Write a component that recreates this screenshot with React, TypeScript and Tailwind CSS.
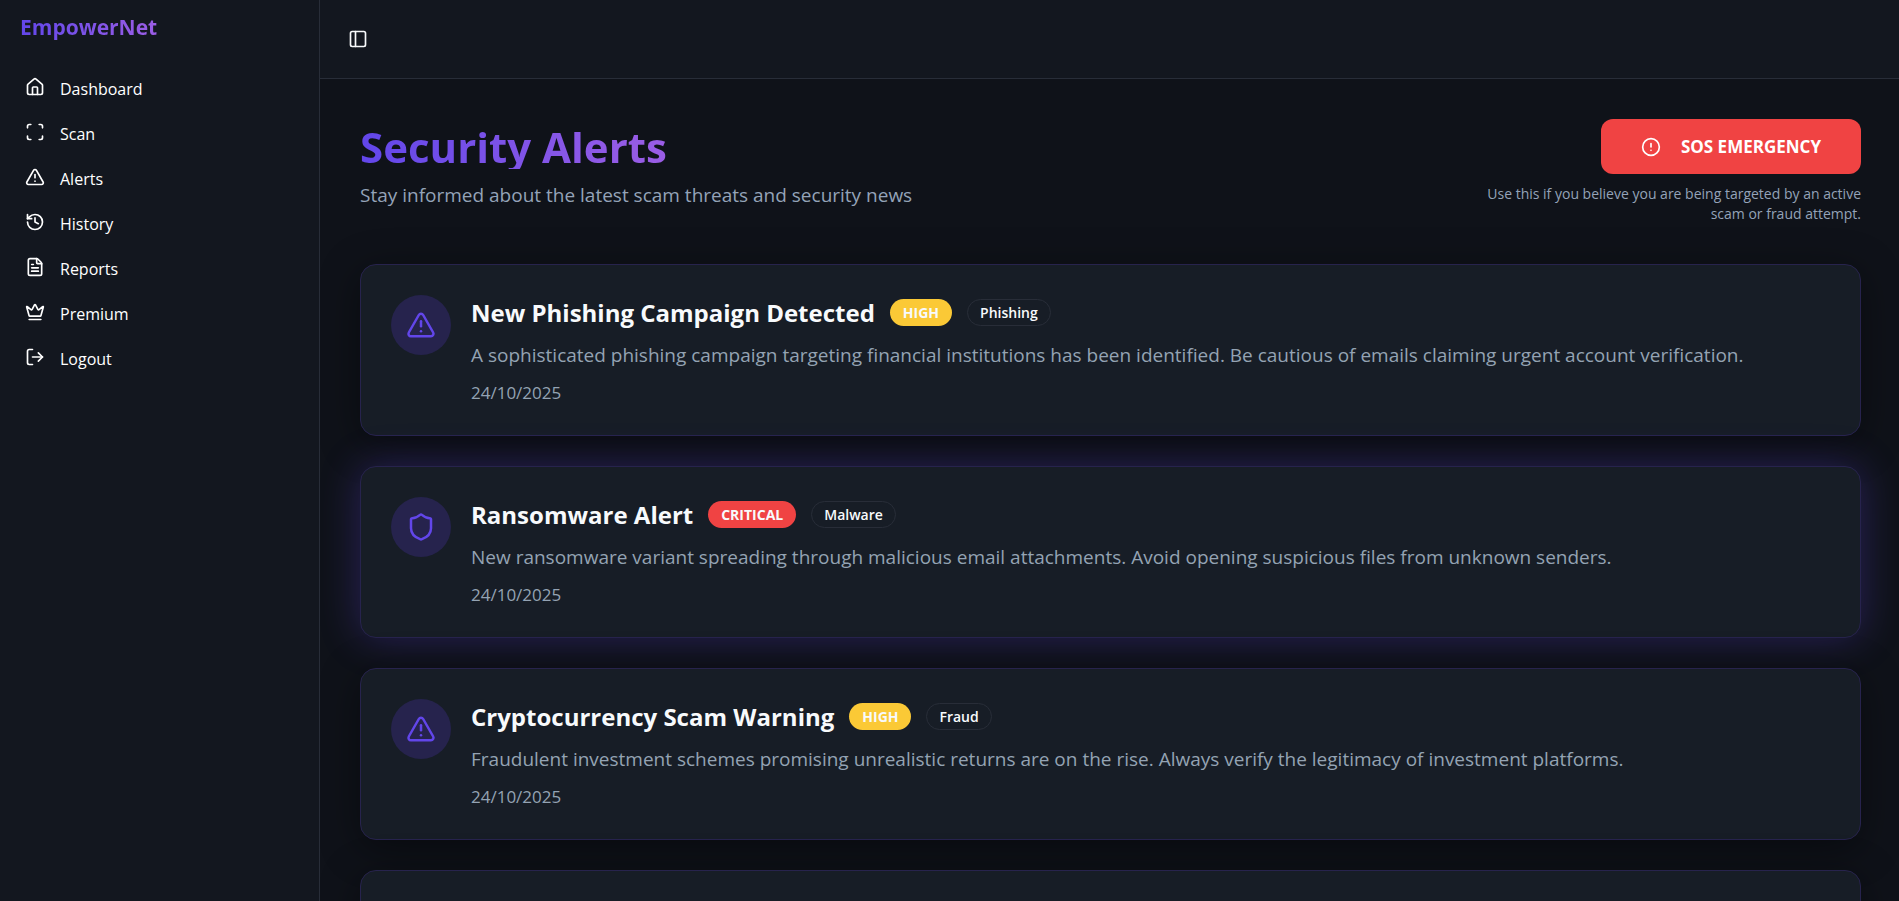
import type { LucideIcon } from 'lucide-react'
import {
  CircleAlert,
  Crown,
  FileText,
  History,
  House,
  LogOut,
  PanelLeft,
  Scan,
  Shield,
  TriangleAlert,
} from 'lucide-react'
import clsx from 'clsx'

interface Alert {
  id: number
  title: string
  description: string
  severity: 'high' | 'critical'
  category: string
  date: string
  icon: LucideIcon
  highlighted?: boolean
}

const navItems: { label: string; icon: LucideIcon }[] = [
  { label: 'Dashboard', icon: House },
  { label: 'Scan', icon: Scan },
  { label: 'Alerts', icon: TriangleAlert },
  { label: 'History', icon: History },
  { label: 'Reports', icon: FileText },
  { label: 'Premium', icon: Crown },
  { label: 'Logout', icon: LogOut },
]

const alerts: Alert[] = [
  {
    id: 1,
    title: 'New Phishing Campaign Detected',
    description:
      'A sophisticated phishing campaign targeting financial institutions has been identified. Be cautious of emails claiming urgent account verification.',
    severity: 'high',
    category: 'Phishing',
    date: '24/10/2025',
    icon: TriangleAlert,
  },
  {
    id: 2,
    title: 'Ransomware Alert',
    description:
      'New ransomware variant spreading through malicious email attachments. Avoid opening suspicious files from unknown senders.',
    severity: 'critical',
    category: 'Malware',
    date: '24/10/2025',
    icon: Shield,
    highlighted: true,
  },
  {
    id: 3,
    title: 'Cryptocurrency Scam Warning',
    description:
      'Fraudulent investment schemes promising unrealistic returns are on the rise. Always verify the legitimacy of investment platforms.',
    severity: 'high',
    category: 'Fraud',
    date: '24/10/2025',
    icon: TriangleAlert,
  },
]

function Sidebar() {
  return (
    <aside className="w-80 shrink-0 border-r border-[#282d38] bg-[#13171f]">
      <div className="px-5 pt-2.5">
        <span className="block w-fit bg-gradient-to-r from-[#6246ea] to-[#9b5de5] bg-clip-text text-[21px] leading-[35px] font-bold text-transparent">
          EmpowerNet
        </span>
      </div>
      <nav className="mt-6 flex flex-col gap-[5px] px-[15px]">
        {navItems.map(({ label, icon: Icon }) => (
          <a key={label} href="#" className="flex h-10 items-center gap-[15px] rounded-lg px-2.5 text-[16px] text-white">
            <Icon className="mb-1 h-5 w-5" />
            <span>{label}</span>
          </a>
        ))}
      </nav>
    </aside>
  )
}

function AlertCard({ alert }: { alert: Alert }) {
  const Icon = alert.icon

  return (
    <article
      className={clsx(
        'flex items-start gap-5 rounded-2xl border border-[#27234d] bg-[#171d26] p-[30px]',
        alert.highlighted ? 'shadow-[0_0_40px_rgba(98,70,234,0.3)]' : 'shadow-[0_8px_40px_rgba(0,0,0,0.4)]'
      )}
    >
      <div className="flex h-[60px] w-[60px] shrink-0 items-center justify-center rounded-full bg-[#26234d]">
        <Icon className="h-[30px] w-[30px] text-[#6246ea]" />
      </div>
      <div className="min-w-0 flex-1">
        <div className="mb-2.5 flex items-center gap-[15px]">
          <h2 className="text-[24px] leading-[35px] font-bold text-[#f8fafc]">{alert.title}</h2>
          <span
            className={clsx(
              'flex h-[27px] items-center rounded-full px-[13px] text-[14px] font-bold text-[#f8fafc]',
              alert.severity === 'critical' ? 'bg-[#f04343]' : 'bg-[#fbc936]'
            )}
          >
            {alert.severity.toUpperCase()}
          </span>
          <span className="flex h-[27px] items-center rounded-full border border-[#282d38] px-3 text-[14px] font-semibold text-[#f8fafc]">
            {alert.category}
          </span>
        </div>
        <p className="mb-2.5 text-[19px] leading-[30px] text-[#94a3b3]">{alert.description}</p>
        <time className="block text-[17px] leading-[25px] text-[#94a3b3]">{alert.date}</time>
      </div>
    </article>
  )
}

export default function App() {
  return (
    <div className="flex h-screen overflow-hidden bg-[#0f1219] font-['Open_Sans','Noto_Sans',sans-serif]">
      <Sidebar />

      <div className="flex min-w-0 flex-1 flex-col">
        {/* Top bar */}
        <header className="flex h-[79px] shrink-0 items-center border-b border-[#282d38] bg-[#13171f] px-7">
          <button type="button" aria-label="Toggle sidebar" className="text-[#f8fafc]">
            <PanelLeft className="h-5 w-5" />
          </button>
        </header>

        <main className="flex-1 overflow-hidden py-10 pr-[38px] pl-10">
          {/* Page heading */}
          <div className="mb-10 flex items-start justify-between">
            <div>
              <h1 className="mb-2.5 h-[50px] w-fit bg-gradient-to-r from-[#6246ea] to-[#9b5de5] bg-clip-text text-[42px] leading-[56px] font-bold text-transparent">
                Security Alerts
              </h1>
              <p className="text-[19px] leading-8 text-[#94a3b8]">
                Stay informed about the latest scam threats and security news
              </p>
            </div>
            <div className="flex flex-col items-end gap-2.5">
              <button
                type="button"
                className="flex h-[55px] items-center gap-5 rounded-xl bg-[#f04343] px-10 text-[17px] font-bold text-white"
              >
                <CircleAlert className="h-5 w-5" />
                SOS EMERGENCY
              </button>
              <p className="max-w-[400px] text-right text-[14px] leading-5 text-[#94a3b8]">
                Use this if you believe you are being targeted by an active scam or fraud attempt.
              </p>
            </div>
          </div>

          {/* Alerts */}
          <div className="flex flex-col gap-[30px]">
            {alerts.map((alert) => (
              <AlertCard key={alert.id} alert={alert} />
            ))}
            <div className="h-[172px] rounded-2xl border border-[#27234d] bg-[#171d26] shadow-[0_8px_40px_rgba(0,0,0,0.4)]" />
          </div>
        </main>
      </div>
    </div>
  )
}
